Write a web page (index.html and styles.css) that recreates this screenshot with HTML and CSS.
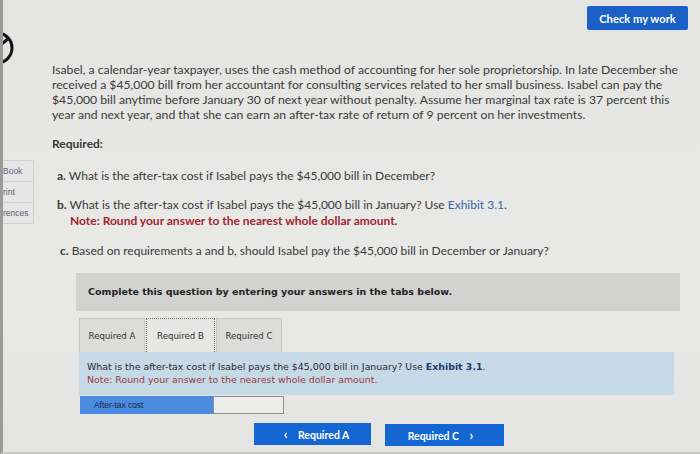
FILE: index.html
```html
<!DOCTYPE html>
<html>
<head>
<meta charset="utf-8">
<link rel="stylesheet" href="styles.css">
</head>
<body>
<div class="page">
  <aside class="side">
    <div class="timer">
      <svg width="36" height="36" viewBox="0 0 36 36"><circle cx="18" cy="18" r="15" fill="none" stroke="#111" stroke-width="3"/><path d="M18 18 L30 8" stroke="#111" stroke-width="3" fill="none"/></svg>
    </div>
    <div class="tools">
      <div class="tool">Book</div>
      <div class="tool">rint</div>
      <div class="tool">rences</div>
    </div>
  </aside>
  <main class="main">
    <div class="topbar"><button class="check">Check my work</button></div>
    <p class="intro">Isabel, a calendar-year taxpayer, uses the cash method of accounting for her sole proprietorship. In late December she received a $45,000 bill from her accountant for consulting services related to her small business. Isabel can pay the $45,000 bill anytime before January 30 of next year without penalty. Assume her marginal tax rate is 37 percent this year and next year, and that she can earn an after-tax rate of return of 9 percent on her investments.</p>
    <p class="req">Required:</p>
    <p class="q qa"><b>a.</b> What is the after-tax cost if Isabel pays the $45,000 bill in December?</p>
    <div class="q qb">
      <div><b>b.</b> What is the after-tax cost if Isabel pays the $45,000 bill in January? Use <span class="link">Exhibit 3.1</span>.</div>
      <div class="note">Note: Round your answer to the nearest whole dollar amount.</div>
    </div>
    <p class="q qc"><b>c.</b> Based on requirements a and b, should Isabel pay the $45,000 bill in December or January?</p>

    <div class="work">
      <div class="banner">Complete this question by entering your answers in the tabs below.</div>
      <div class="tabs">
        <div class="tab">Required A</div>
        <div class="tab active">Required B</div>
        <div class="tab">Required C</div>
      </div>
      <div class="info">
        <div>What is the after-tax cost if Isabel pays the $45,000 bill in January? Use <b class="ex">Exhibit 3.1</b>.</div>
        <div class="inote">Note: Round your answer to the nearest whole dollar amount.</div>
      </div>
      <div class="answer">
        <div class="alabel">After-tax cost</div>
        <div class="ainput"></div>
      </div>
      <div class="nav">
        <button class="navbtn prev"><span class="chev">&lsaquo;</span> Required A</button>
        <button class="navbtn next">Required C <span class="chev">&rsaquo;</span></button>
      </div>
    </div>
  </main>
</div>
</body>
</html>
```
FILE: styles.css
```css
html, body {
  margin: 0;
  padding: 0;
}
body {
  width: 700px;
  height: 454px;
  overflow: hidden;
  background: linear-gradient(180deg, #e4e4e2 0%, #e9e9e7 60%, #e4e4e2 100%);
  font-family: "Lato", "Open Sans", sans-serif;
  color: #3a3a3a;
}
.page {
  display: flex;
  height: 454px;
  border-left: 3px solid #9a9a98;
  border-bottom: 2px solid #c9c9c7;
  box-sizing: border-box;
}
.side {
  width: 31px;
  flex: none;
  display: flex;
  flex-direction: column;
  overflow: hidden;
}
.timer {
  margin-top: 30px;
  margin-left: -24px;
  height: 36px;
}
.tools {
  margin-top: 94px;
  display: flex;
  flex-direction: column;
}
.tool {
  height: 20px;
  border: 1px solid #d2d2d0;
  border-left: none;
  margin-bottom: -1px;
  background: #e6e6e6;
  white-space: nowrap;
  font-family: "Liberation Sans", sans-serif;
  font-size: 8.5px;
  line-height: 20px;
  color: #5e5e7a;
}
.main {
  flex: 1;
  padding-left: 18px;
  padding-right: 14px;
}
.topbar {
  display: flex;
  justify-content: flex-end;
  padding-top: 6px;
  padding-right: 0;
  margin-right: -2px;
}
.check {
  width: 101px;
  height: 24px;
  border: none;
  border-radius: 2px;
  background: #1a60c6;
  color: #fff;
  font-family: "Lato", sans-serif;
  font-weight: bold;
  font-size: 11.2px;
  padding: 0;
}
.intro {
  margin: 32px 0 0 0;
  font-size: 12.2px;
  line-height: 15px;
}
.req {
  margin: 14px 0 0 0;
  font-weight: bold;
  font-size: 12px;
  line-height: 15px;
}
.q {
  margin: 0;
  padding-left: 5px;
  font-size: 12px;
  line-height: 16px;
}
.q b { font-weight: bold; }
.qa { margin-top: 17px; }
.qb { margin-top: 13px; }
.qc { margin-top: 14px; padding-left: 8px; }
.note {
  padding-left: 13px;
  color: #a3262e;
  font-weight: bold;
}
.link { color: #3565a8; }
.work {
  margin-left: 24px;
  margin-right: 6px;
  margin-top: 14px;
}
.banner {
  height: 38px;
  background: #d2d2d0;
  font-family: "DejaVu Sans", sans-serif;
  font-weight: bold;
  font-size: 9.5px;
  line-height: 38px;
  padding-left: 12px;
  color: #222;
}
.tabs {
  display: flex;
  margin-top: 7px;
  margin-left: 3px;
}
.tab {
  width: 66px;
  height: 34px;
  box-sizing: border-box;
  border: 1px solid #c6c6c4;
  border-bottom: none;
  background: #dcdcda;
  font-family: "DejaVu Sans", sans-serif;
  font-size: 8.6px;
  line-height: 34px;
  text-align: center;
  color: #333;
}
.tab.active {
  width: 69px;
  border: 1px dotted #777;
  border-bottom: none;
  background: #e6e6e4;
}
.tab + .tab { margin-left: 1px; }
.info {
  margin-left: 3px;
  margin-right: 6px;
  background: #c6d9e6;
  height: 43px;
  box-sizing: border-box;
  padding: 8px 0 0 8px;
  font-family: "DejaVu Sans", sans-serif;
  font-size: 9.4px;
  line-height: 13px;
  color: #2a2a2a;
}
.ex { color: #1f3c70; }
.inote { color: #9a3a3e; }
.answer {
  display: flex;
  margin-left: 4px;
  margin-top: 1px;
  height: 18px;
}
.alabel {
  width: 133px;
  background: #4a8be0;
  font-family: "Liberation Sans", sans-serif;
  font-size: 8.4px;
  line-height: 18px;
  padding-left: 14px;
  box-sizing: border-box;
  color: #1d2a44;
}
.ainput {
  width: 71px;
  box-sizing: border-box;
  border: 1px solid #8e8e8e;
  background: #ececea;
}
.nav {
  display: flex;
  margin-top: 9px;
  margin-left: 178px;
  gap: 14px;
}
.navbtn {
  width: 117px;
  height: 22px;
  border: none;
  background: #1466d2;
  color: #fff;
  font-family: "Lato", sans-serif;
  font-weight: bold;
  font-size: 10.5px;
  padding: 0;
}
.chev {
  font-size: 13px;
  font-weight: bold;
  margin: 0 8px;
}
.next { margin-top: 1px; width: 119px; }
```
